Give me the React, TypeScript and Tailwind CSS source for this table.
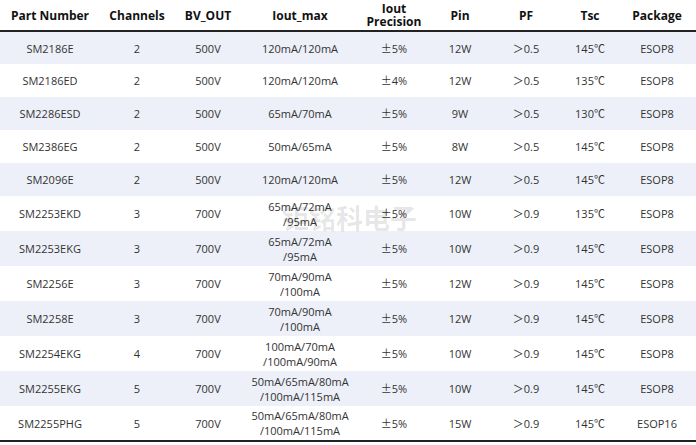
const COLS = [
  { key: 'part', label: ['Part Number'], w: 'w-[100px]' },
  { key: 'ch', label: ['Channels'], w: 'w-[74px]' },
  { key: 'bv', label: ['BV_OUT'], w: 'w-[68px]' },
  { key: 'iout', label: ['Iout_max'], w: 'w-[116px]' },
  { key: 'prec', label: ['Iout', 'Precision'], w: 'w-[72px]' },
  { key: 'pin', label: ['Pin'], w: 'w-[60px]' },
  { key: 'pf', label: ['PF'], w: 'w-[72px]' },
  { key: 'tsc', label: ['Tsc'], w: 'w-[56px]' },
  { key: 'pkg', label: ['Package'], w: 'w-[78px]' },
]

type Row = [string, string, string, string[], string, string, string, string, string]

const ROWS: Row[] = [
  ['SM2186E', '2', '500V', ['120mA/120mA'], '5%', '12W', '＞0.5', '145℃', 'ESOP8'],
  ['SM2186ED', '2', '500V', ['120mA/120mA'], '4%', '12W', '＞0.5', '135℃', 'ESOP8'],
  ['SM2286ESD', '2', '500V', ['65mA/70mA'], '5%', '9W', '＞0.5', '130℃', 'ESOP8'],
  ['SM2386EG', '2', '500V', ['50mA/65mA'], '5%', '8W', '＞0.5', '145℃', 'ESOP8'],
  ['SM2096E', '2', '500V', ['120mA/120mA'], '5%', '12W', '＞0.5', '145℃', 'ESOP8'],
  ['SM2253EKD', '3', '700V', ['65mA/72mA', '/95mA'], '5%', '10W', '＞0.9', '135℃', 'ESOP8'],
  ['SM2253EKG', '3', '700V', ['65mA/72mA', '/95mA'], '5%', '10W', '＞0.9', '145℃', 'ESOP8'],
  ['SM2256E', '3', '700V', ['70mA/90mA', '/100mA'], '5%', '12W', '＞0.9', '145℃', 'ESOP8'],
  ['SM2258E', '3', '700V', ['70mA/90mA', '/100mA'], '5%', '12W', '＞0.9', '145℃', 'ESOP8'],
  ['SM2254EKG', '4', '700V', ['100mA/70mA', '/100mA/90mA'], '5%', '10W', '＞0.9', '145℃', 'ESOP8'],
  ['SM2255EKG', '5', '700V', ['50mA/65mA/80mA', '/100mA/115mA'], '5%', '10W', '＞0.9', '145℃', 'ESOP8'],
  ['SM2255PHG', '5', '700V', ['50mA/65mA/80mA', '/100mA/115mA'], '5%', '15W', '＞0.9', '145℃', 'ESOP16'],
]

export default function App() {
  return (
    <div className="relative w-[696px] h-[445px] overflow-hidden bg-white font-['Open_Sans','Noto_Sans_CJK_SC',sans-serif]">
      <table className="w-[696px] table-fixed border-collapse">
        <thead>
          <tr className="h-[31px] border-b-2 border-[#222]">
            {COLS.map((c) => (
              <th key={c.key} className={`${c.w} p-0 text-center align-middle text-[12px] font-bold leading-[13px] text-[#111]`}>
                {c.label.map((l) => (
                  <div key={l}>{l}</div>
                ))}
              </th>
            ))}
          </tr>
        </thead>
        <tbody>
          {ROWS.map((r, i) => (
            <tr
              key={r[0]}
              className={`${i < 5 ? 'h-[33px]' : 'h-[35px]'} ${i % 2 === 0 ? 'bg-[#edf0f8]' : 'bg-white'} ${i === ROWS.length - 1 ? 'border-b-2 border-[#222]' : ''}`}
            >
              {r.map((cell, j) => (
                <td key={j} className="p-0 text-center align-middle text-[11px] leading-[15px] text-[#333]">
                  {Array.isArray(cell) ? (
                    cell.map((l) => <div key={l}>{l}</div>)
                  ) : j === 4 ? (
                    <>
                      <span className="font-['Noto_Sans_CJK_SC',sans-serif]">±</span>
                      {cell}
                    </>
                  ) : (
                    cell
                  )}
                </td>
              ))}
            </tr>
          ))}
        </tbody>
      </table>
      {/* faint watermark over the table */}
      <div className="pointer-events-none absolute left-[282px] top-[203px] flex text-[27px] font-bold leading-[30px] text-black/10 font-['Noto_Sans_CJK_SC',sans-serif]">
        钜铭科电子
      </div>
    </div>
  )
}
